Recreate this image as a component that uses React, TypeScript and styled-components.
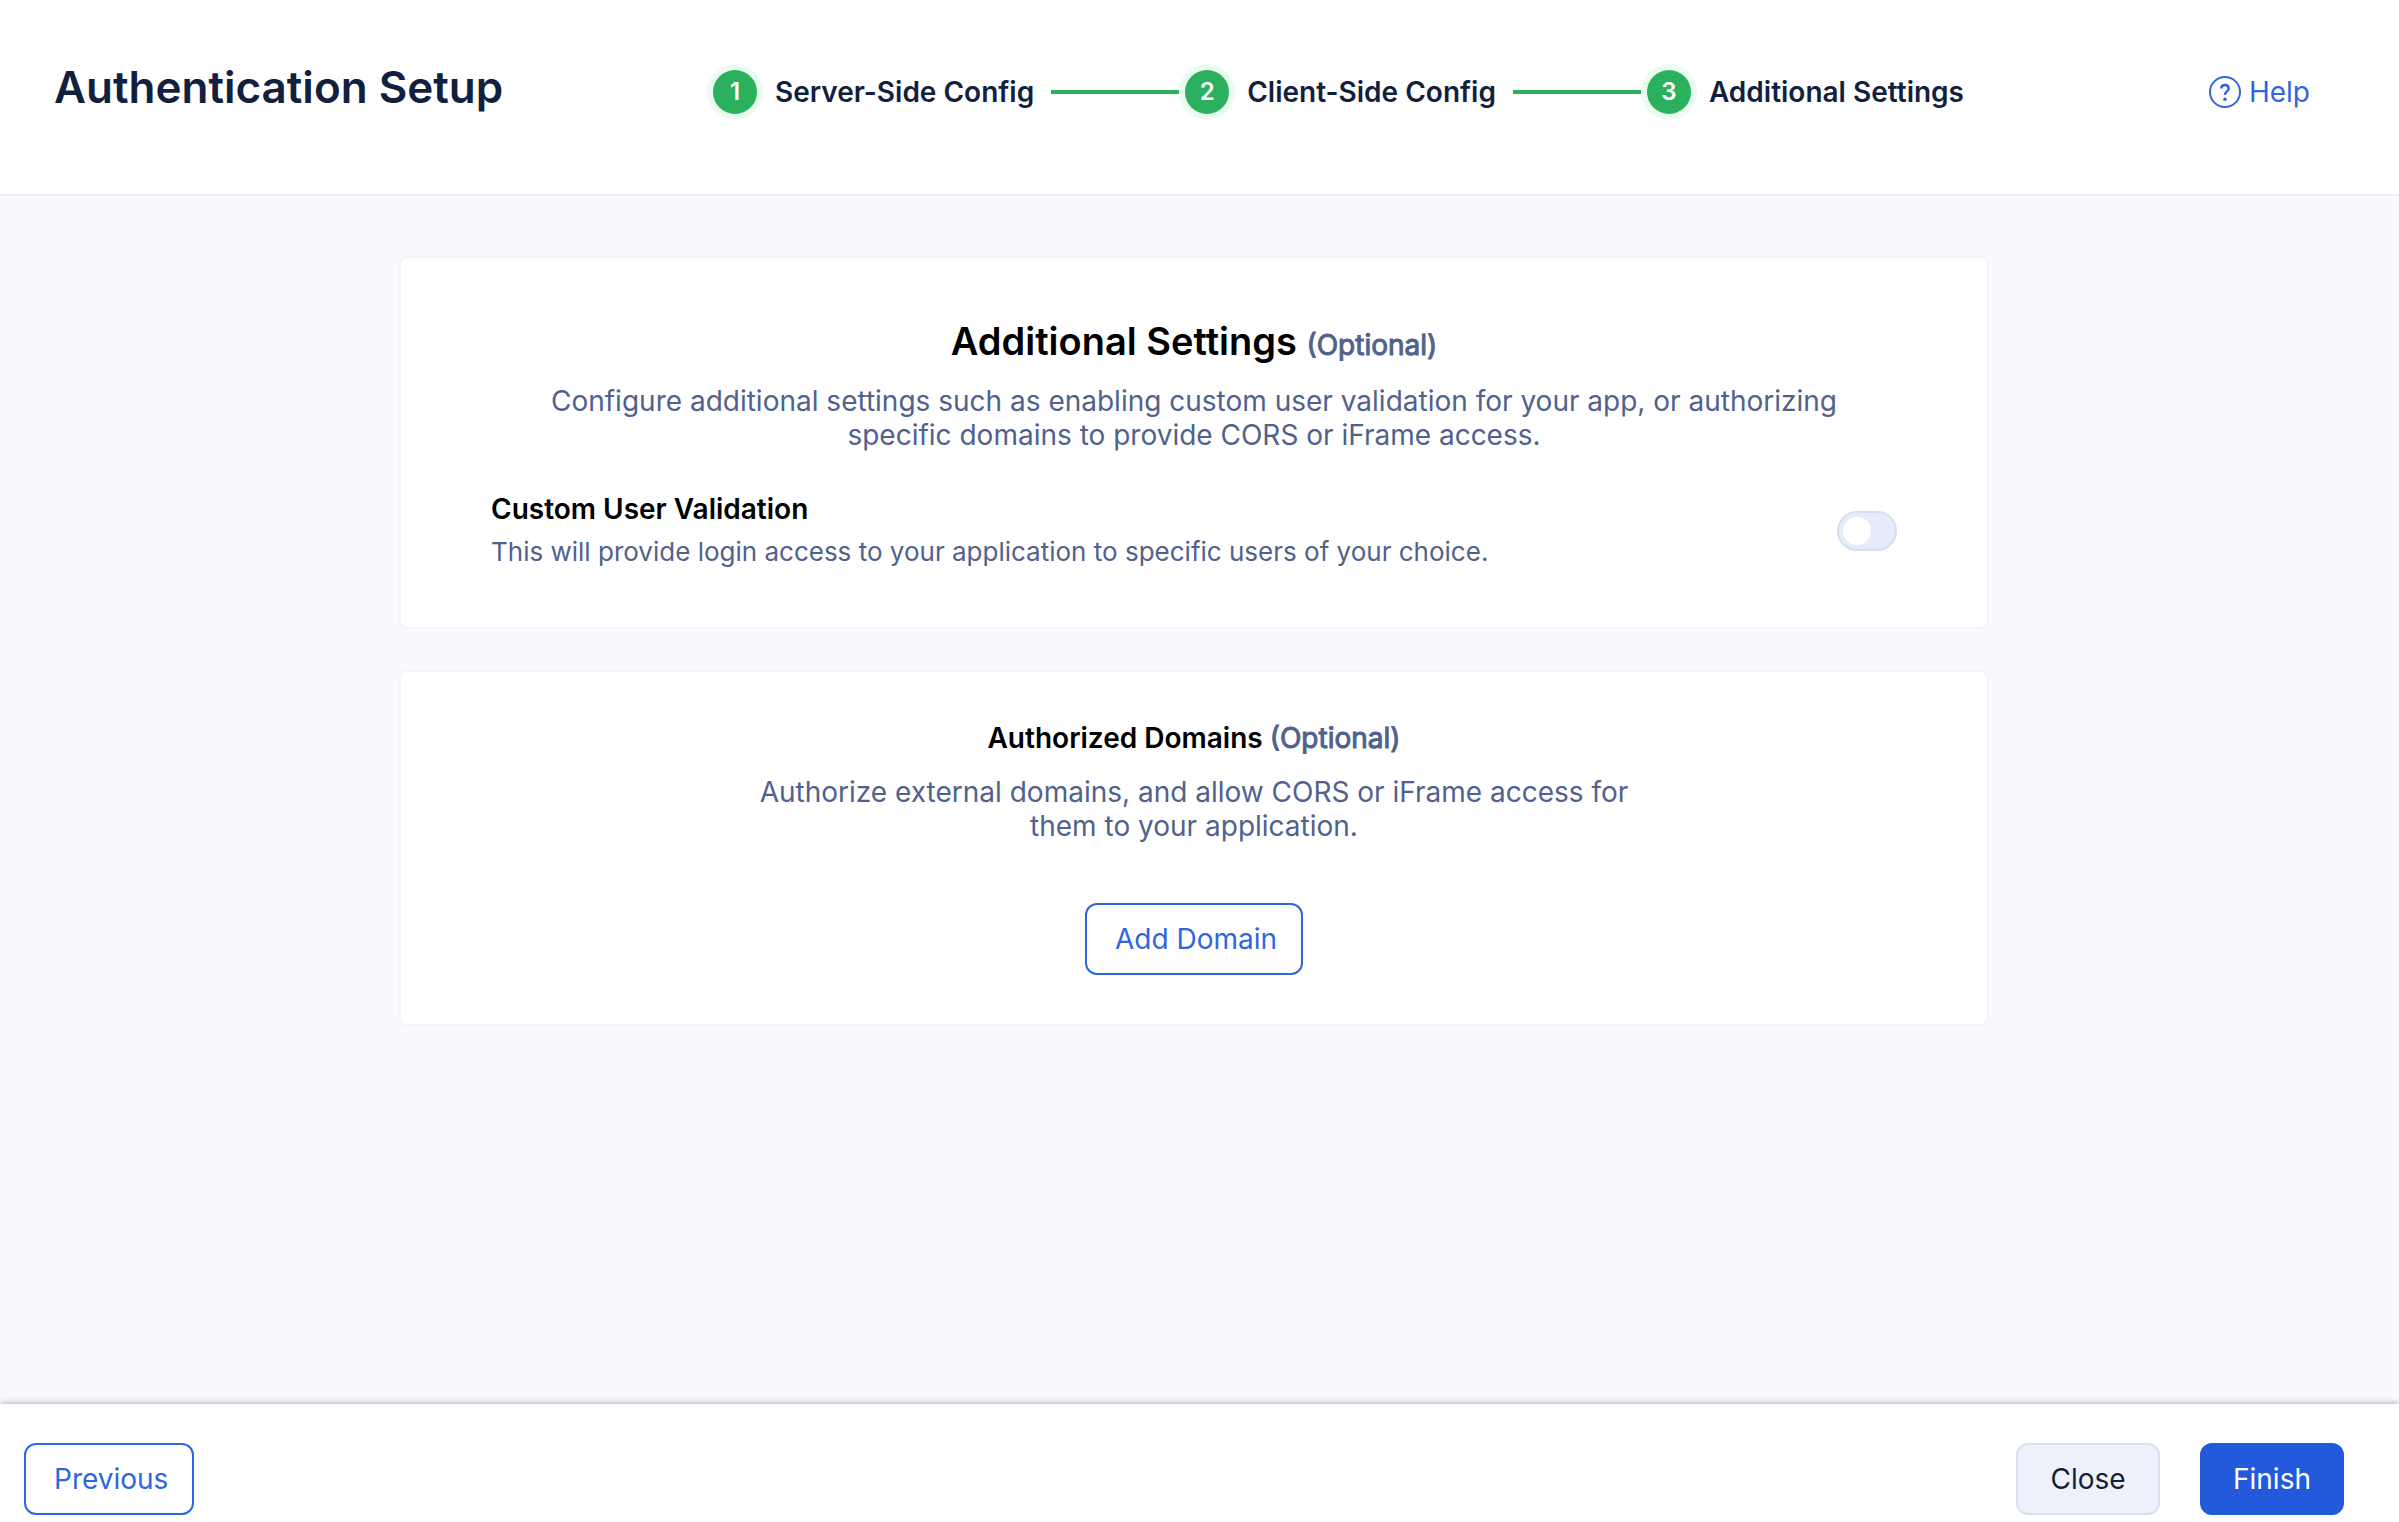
import React, { useState } from "react";
import styled, { createGlobalStyle } from "styled-components";

const color = {
  ink: "#121f3e",
  muted: "#50628c",
  blue: "#2f66e0",
  primary: "#225adb",
  green: "#2bb15e",
  halo: "#e9fcef",
  page: "#f9fafe",
  line: "#eef0f4",
  cardLine: "#f2f4f8",
};

const GlobalStyle = createGlobalStyle`
  *, *::before, *::after { box-sizing: border-box; }
  body {
    margin: 0;
    background: ${color.page};
    color: ${color.ink};
    font-family: Inter, "Liberation Sans", sans-serif;
    font-size: 28px;
    line-height: 34px;
  }
  h1, h2, h3, p, ol { margin: 0; padding: 0; }
`;

const Page = styled.div`
  display: flex;
  flex-direction: column;
  min-height: 100vh;
`;

const Header = styled.header`
  display: grid;
  grid-template-columns: 1fr auto 346px;
  align-items: start;
  padding: 60px 89px 70px 54px;
  background: #fff;
  border-bottom: 2px solid ${color.line};
`;

const Title = styled.h1`
  font-size: 44px;
  line-height: 54px;
  font-weight: 600;
`;

const Steps = styled.ol`
  display: flex;
  align-items: center;
  height: 64px;
  list-style: none;
`;

const Step = styled.li`
  display: flex;
  align-items: center;
  font-weight: 600;

  & + &::before {
    content: "";
    width: 128px;
    height: 4px;
    margin: 0 6px 0 17px;
    background: ${color.green};
  }
`;

const StepNumber = styled.span`
  display: grid;
  place-items: center;
  width: 44px;
  height: 44px;
  margin-right: 18px;
  border-radius: 50%;
  background: ${color.green};
  box-shadow: 0 0 0 6px ${color.halo};
  color: #fff;
  font-size: 24px;
`;

const HelpLink = styled.a`
  display: flex;
  align-items: center;
  justify-self: end;
  gap: 8px;
  height: 64px;
  color: ${color.blue};
  text-decoration: none;
`;

const Main = styled.main`
  flex: 1;
  display: flex;
  flex-direction: column;
  align-items: center;
  gap: 41px;
  padding: 60px 11px 40px 0;
`;

const Card = styled.section<{ $top: number; $bottom: number }>`
  display: flex;
  flex-direction: column;
  align-items: center;
  width: 100%;
  max-width: 1590px;
  padding: ${(p) => p.$top}px 90px ${(p) => p.$bottom}px;
  background: #fff;
  border: 2px solid ${color.cardLine};
  border-radius: 8px;
  text-align: center;
`;

const CardTitle = styled.h2<{ $large?: boolean }>`
  margin-bottom: ${(p) => (p.$large ? 15 : 20)}px;
  color: #000;
  font-size: ${(p) => (p.$large ? 38 : 28)}px;
  line-height: ${(p) => (p.$large ? 48 : 34)}px;
  font-weight: 600;
`;

const Optional = styled.span`
  color: ${color.muted};
  font-size: 28px;
  font-weight: 400;
  -webkit-text-stroke: 1px ${color.muted};
`;

const Description = styled.p<{ $width: number }>`
  max-width: ${(p) => p.$width}px;
  color: ${color.muted};
`;

const SettingRow = styled.div`
  display: flex;
  align-items: center;
  justify-content: space-between;
  width: 100%;
  margin-top: 40px;
  text-align: left;
`;

const SettingLabel = styled.label`
  display: block;
  margin-bottom: 9px;
  color: #000;
  font-weight: 600;
`;

const SettingHint = styled.p`
  color: ${color.muted};
  font-size: 26px;
`;

const Switch = styled.input`
  appearance: none;
  display: flex;
  align-items: center;
  width: 60px;
  height: 40px;
  margin: 0;
  padding: 0 4px;
  border: 2px solid #d7def0;
  border-radius: 20px;
  background: #e7ebfe;

  &::before {
    content: "";
    width: 28px;
    height: 28px;
    border-radius: 50%;
    background: #fff;
  }
  &:checked { justify-content: flex-end; background: ${color.primary}; }
`;

const variants = {
  outline: { bg: "#fff", border: color.blue, text: color.blue, padding: "0 24px 0 28px" },
  soft: { bg: "#eef1fa", border: "#d9def0", text: color.ink, padding: "0 24px" },
  primary: { bg: color.primary, border: color.primary, text: "#fff", padding: "0 24px" },
};

const Button = styled.button<{ $variant: keyof typeof variants }>`
  height: 72px;
  min-width: 144px;
  padding: ${(p) => variants[p.$variant].padding};
  border: 2px solid ${(p) => variants[p.$variant].border};
  border-radius: 12px;
  background: ${(p) => variants[p.$variant].bg};
  color: ${(p) => variants[p.$variant].text};
  font: inherit;
  cursor: pointer;
`;

const CardAction = styled.div`
  margin-top: 60px;
`;

const Footer = styled.footer`
  display: flex;
  justify-content: space-between;
  padding: 39px 55px 7px 24px;
  background: #fff;
  box-shadow: 0 -1px 6px rgba(0, 0, 0, 0.3);
`;

const FooterGroup = styled.div`
  display: flex;
  gap: 40px;
`;

const HelpIcon = () => (
  <svg width="32" height="32" viewBox="0 0 32 32" fill="none" stroke="currentColor" strokeWidth="2" aria-hidden="true">
    <circle cx="16" cy="16" r="15" />
    <path d="M12.3 12.6c0-2.2 1.5-3.6 3.7-3.6s3.7 1.4 3.7 3.4c0 2.9-3.7 3.1-3.7 6.4" strokeWidth="2.5" />
    <circle cx="16" cy="23.3" r="1.8" fill="currentColor" stroke="none" />
  </svg>
);

const steps = ["Server-Side Config", "Client-Side Config", "Additional Settings"];

export default function App() {
  const [validation, setValidation] = useState(false);

  return (
    <Page>
      <GlobalStyle />
      <Header>
        <Title>Authentication Setup</Title>
        <Steps>
          {steps.map((name, i) => (
            <Step key={name}>
              <StepNumber>{i + 1}</StepNumber>
              {name}
            </Step>
          ))}
        </Steps>
        <HelpLink href="#help">
          <HelpIcon />
          Help
        </HelpLink>
      </Header>

      <Main>
        <Card $top={59} $bottom={58}>
          <CardTitle $large>
            Additional Settings <Optional>(Optional)</Optional>
          </CardTitle>
          <Description $width={1320}>
            Configure additional settings such as enabling custom user validation for your app, or authorizing
            specific domains to provide CORS or iFrame access.
          </Description>
          <SettingRow>
            <div>
              <SettingLabel htmlFor="user-validation">Custom User Validation</SettingLabel>
              <SettingHint id="user-validation-hint">
                This will provide login access to your application to specific users of your choice.
              </SettingHint>
            </div>
            <Switch
              id="user-validation"
              type="checkbox"
              role="switch"
              aria-describedby="user-validation-hint"
              checked={validation}
              onChange={(e) => setValidation(e.target.checked)}
            />
          </SettingRow>
        </Card>

        <Card $top={49} $bottom={49}>
          <CardTitle>
            Authorized Domains <Optional>(Optional)</Optional>
          </CardTitle>
          <Description $width={920}>
            Authorize external domains, and allow CORS or iFrame access for them to your application.
          </Description>
          <CardAction>
            <Button type="button" $variant="outline">Add Domain</Button>
          </CardAction>
        </Card>
      </Main>

      <Footer>
        <Button type="button" $variant="outline">Previous</Button>
        <FooterGroup>
          <Button type="button" $variant="soft">Close</Button>
          <Button type="button" $variant="primary">Finish</Button>
        </FooterGroup>
      </Footer>
    </Page>
  );
}
